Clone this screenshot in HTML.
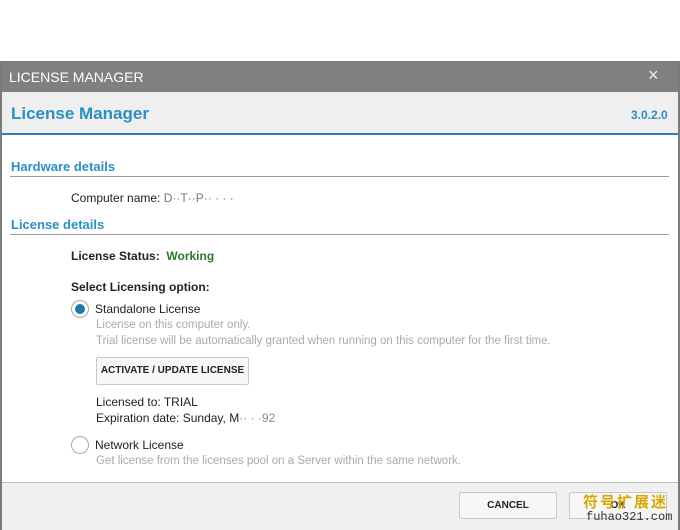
<!DOCTYPE html>
<html><head><meta charset="utf-8"><style>
*{margin:0;padding:0;box-sizing:border-box}
body{width:680px;height:530px;background:#fff;position:relative;font-family:"Liberation Sans",sans-serif;overflow:hidden}
.a{position:absolute;white-space:nowrap}
.win{position:absolute;left:0;top:61px;width:680px;height:469px;border-left:2px solid #7a7a7a;border-right:2px solid #7a7a7a}
.tb{position:absolute;left:0;top:61px;width:680px;height:31px;background:#808080}
.hd{position:absolute;left:2px;top:92px;width:676px;height:43px;background:#efefef;border-bottom:2px solid #2a7fb6}
.sec{color:#2a8fc8;font-weight:bold;font-size:13px}
.line{position:absolute;left:10px;width:659px;height:1px;background:#999}
.t{font-size:12px;color:#222}
.g{font-size:11.5px;color:#aaa}
.btn{position:absolute;background:#f7f7f7;border:1px solid #c8c8c8;border-radius:2px;font-size:10px;font-weight:bold;color:#222;text-align:center}
.ft{position:absolute;left:2px;top:482px;width:676px;height:48px;background:#f0f0f0;border-top:1px solid #bbb}
</style></head><body>
<div class="tb"></div>
<div class="a" style="left:9px;top:69px;color:#fff;font-size:14px">LICENSE MANAGER</div>
<div class="a" style="left:648px;top:65px;color:#eee;font-size:18px">×</div>
<div class="win"></div>
<div class="hd"></div>
<div class="a" style="left:11px;top:104px;color:#2a8fc8;font-weight:bold;font-size:17px">License Manager</div>
<div class="a" style="left:631px;top:108px;color:#2a8fc8;font-weight:bold;font-size:12px">3.0.2.0</div>
<div class="a sec" style="left:11px;top:159px">Hardware details</div>
<div class="line" style="top:176px"></div>
<div class="a t" style="left:71px;top:191px">Computer name: <span style="color:#777">D··T··P·· · · ·</span></div>
<div class="a sec" style="left:11px;top:217px">License details</div>
<div class="line" style="top:234px"></div>
<div class="a t" style="left:71px;top:249px;font-weight:bold">License Status: &nbsp;<span style="color:#2d7a2d">Working</span></div>
<div class="a t" style="left:71px;top:280px;font-weight:bold">Select Licensing option:</div>
<div class="a" style="left:71px;top:300px;width:18px;height:18px;border:1px solid #aaa;border-radius:50%;background:#fff"><div style="position:absolute;left:3px;top:3px;width:10px;height:10px;border-radius:50%;background:#1f77a8"></div></div>
<div class="a t" style="left:95px;top:302px">Standalone License</div>
<div class="a g" style="left:96px;top:319px">License on this computer only.</div>
<div class="a g" style="left:96px;top:335px">Trial license will be automatically granted when running on this computer for the first time.</div>
<div class="btn" style="left:96px;top:357px;width:153px;height:28px;line-height:26px">ACTIVATE / UPDATE LICENSE</div>
<div class="a t" style="left:96px;top:395px">Licensed to: TRIAL</div>
<div class="a t" style="left:96px;top:411px">Expiration date: Sunday, M<span style="color:#888">·· · ·92</span></div>
<div class="a" style="left:71px;top:436px;width:18px;height:18px;border:1px solid #aaa;border-radius:50%;background:#fff"></div>
<div class="a t" style="left:95px;top:438px">Network License</div>
<div class="a g" style="left:96px;top:455px">Get license from the licenses pool on a Server within the same network.</div>
<div class="ft"></div>
<div class="btn" style="left:459px;top:492px;width:98px;height:27px;line-height:26px;font-size:10px">CANCEL</div>
<div class="btn" style="left:569px;top:492px;width:98px;height:27px;line-height:26px;font-size:10px">OK</div>
<div class="a" style="left:583px;top:491px;font-size:15px;font-weight:bold;color:#d8a800;font-family:'Noto Sans CJK SC',sans-serif;letter-spacing:2px">符号扩展迷</div>
<div class="a" style="left:586px;top:510px;font-size:12px;color:#333;font-family:'Liberation Mono',monospace">fuhao321.com</div>
</body></html>
